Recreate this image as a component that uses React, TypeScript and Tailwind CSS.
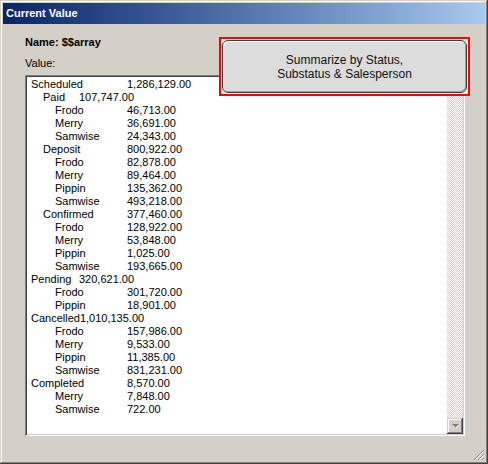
import React from 'react'

type Row = {
  level: 0 | 1 | 2
  label: string
  value: string
  near?: boolean
}

const rows: Row[] = [
  { level: 0, label: 'Scheduled', value: '1,286,129.00' },
  { level: 1, label: 'Paid', value: '107,747.00', near: true },
  { level: 2, label: 'Frodo', value: '46,713.00' },
  { level: 2, label: 'Merry', value: '36,691.00' },
  { level: 2, label: 'Samwise', value: '24,343.00' },
  { level: 1, label: 'Deposit', value: '800,922.00' },
  { level: 2, label: 'Frodo', value: '82,878.00' },
  { level: 2, label: 'Merry', value: '89,464.00' },
  { level: 2, label: 'Pippin', value: '135,362.00' },
  { level: 2, label: 'Samwise', value: '493,218.00' },
  { level: 1, label: 'Confirmed', value: '377,460.00' },
  { level: 2, label: 'Frodo', value: '128,922.00' },
  { level: 2, label: 'Merry', value: '53,848.00' },
  { level: 2, label: 'Pippin', value: '1,025.00' },
  { level: 2, label: 'Samwise', value: '193,665.00' },
  { level: 0, label: 'Pending', value: '320,621.00', near: true },
  { level: 2, label: 'Frodo', value: '301,720.00' },
  { level: 2, label: 'Pippin', value: '18,901.00' },
  { level: 0, label: 'Cancelled', value: '1,010,135.00', near: true },
  { level: 2, label: 'Frodo', value: '157,986.00' },
  { level: 2, label: 'Merry', value: '9,533.00' },
  { level: 2, label: 'Pippin', value: '11,385.00' },
  { level: 2, label: 'Samwise', value: '831,231.00' },
  { level: 0, label: 'Completed', value: '8,570.00' },
  { level: 2, label: 'Merry', value: '7,848.00' },
  { level: 2, label: 'Samwise', value: '722.00' },
]

const indentClass = ['pl-0', 'pl-[12px]', 'pl-[24px]']

const raised =
  'bg-[#d4d0c8] shadow-[inset_-1px_-1px_#404040,inset_1px_1px_#d4d0c8,inset_-2px_-2px_#808080,inset_2px_2px_#ffffff]'

function ArrowButton({ up }: { up?: boolean }) {
  return (
    <div className={`w-[16px] h-[16px] flex items-center justify-center ${raised}`}>
      <svg width="9" height="6" viewBox="0 0 9 6">
        {up ? (
          <>
            <path d="M2 5 L5 2 L8 5 Z" fill="#ffffff" />
            <path d="M1 4 L4.5 0.5 L8 4 Z" fill="#808080" />
          </>
        ) : (
          <>
            <path d="M2 2 L8 2 L5 5 Z" fill="#ffffff" />
            <path d="M1 1 L8 1 L4.5 4.5 Z" fill="#808080" />
          </>
        )}
      </svg>
    </div>
  )
}

export default function App() {
  return (
    <div className="relative w-[488px] h-[464px] bg-[#d4d0c8] p-[3px] flex flex-col font-['Liberation_Sans',Arial,sans-serif] text-[11px] leading-[13px] text-black shadow-[inset_-1px_-1px_#404040,inset_1px_1px_#d4d0c8,inset_-2px_-2px_#808080,inset_2px_2px_#ffffff]">
      <div className="h-[21px] shrink-0 flex items-center pl-[3px] bg-gradient-to-r from-[#0a246a] to-[#a6caf0] text-white font-bold text-[11px]">
        Current Value
      </div>

      <div className="flex-1 flex flex-col px-[22px]">
        <div className="pt-[12px] font-bold">Name: $$array</div>
        <div className="mt-[8px]">Value:</div>

        <div className="mt-[5px] w-[440px] h-[361px] flex bg-white shadow-[inset_1px_1px_#808080,inset_-1px_-1px_#ffffff,inset_2px_2px_#404040,inset_-2px_-2px_#d4d0c8] p-[2px]">
          <div className="flex-1 pl-[4px] pt-[1px]">
            {rows.map((row, i) => (
              <div key={i} className="flex whitespace-nowrap h-[13px]">
                <div className={`shrink-0 ${indentClass[row.level]} ${row.near ? 'min-w-[48px]' : 'min-w-[96px]'}`}>
                  {row.label}
                </div>
                <div>{row.value}</div>
              </div>
            ))}
          </div>
          <div className="w-[16px] flex flex-col">
            <ArrowButton up />
            <div className="flex-1 bg-[repeating-conic-gradient(#d4d0c8_0%_25%,#ffffff_0%_50%)] bg-[length:2px_2px]" />
            <ArrowButton />
          </div>
        </div>
      </div>

      {/* focused command button lying over the list's scrollbar */}
      <div className="absolute left-[219px] top-[37px] w-[251px] h-[59px] border-2 border-[#ff0000] bg-[#ffffe1] p-[1px]">
        <div className="w-full h-full rounded-[6px] border border-[#3c3c3c] bg-[#dcdcdc] shadow-[inset_1px_1px_#ffffff,inset_-1px_-1px_#a0a0a0] flex flex-col items-center justify-center text-[12px] leading-[14px] text-[#111]">
          <span>Summarize by Status,</span>
          <span>Substatus &amp; Salesperson</span>
        </div>
      </div>

      <svg className="absolute right-[3px] bottom-[3px]" width="12" height="12" viewBox="0 0 12 12">
        <path d="M11 1 L1 11 M11 5 L5 11 M11 9 L9 11" stroke="#808080" strokeWidth="1" />
        <path d="M11 2 L2 11 M11 6 L6 11 M11 10 L10 11" stroke="#ffffff" strokeWidth="1" />
      </svg>
    </div>
  )
}
